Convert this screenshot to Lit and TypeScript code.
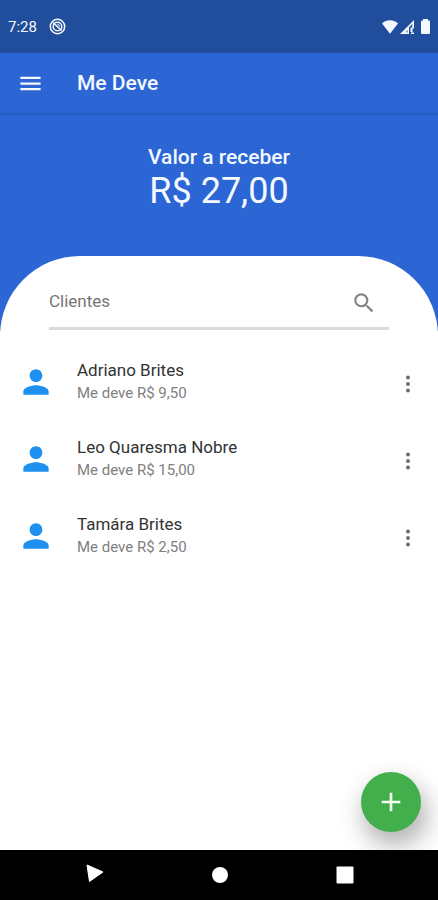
import { LitElement, html, css, svg } from "lit";
import { customElement, state } from "lit/decorators.js";

interface Client {
  name: string;
  debt: string;
}

const glyphs = {
  menu: svg`<path d="M3 18h18v-2H3v2zm0-5h18v-2H3v2zm0-7v2h18V6H3z"/>`,
  person: svg`<path d="M12 12c2.21 0 4-1.79 4-4s-1.79-4-4-4-4 1.79-4 4 1.79 4 4 4zm0 2c-2.67 0-8 1.34-8 4v2h16v-2c0-2.66-5.33-4-8-4z"/>`,
  search: svg`<path d="M15.5 14h-.79l-.28-.27A6.47 6.47 0 0 0 16 9.5 6.5 6.5 0 1 0 9.5 16c1.61 0 3.09-.59 4.23-1.57l.27.28v.79l5 4.99L20.49 19l-4.99-5zm-6 0C7.01 14 5 11.99 5 9.5S7.01 5 9.5 5 14 7.01 14 9.5 11.99 14 9.5 14z"/>`,
  more: svg`<circle cx="12" cy="6" r="1.8"/><circle cx="12" cy="12" r="1.8"/><circle cx="12" cy="18" r="1.8"/>`,
  add: svg`<path d="M19 13h-6v6h-2v-6H5v-2h6V5h2v6h6v2z"/>`,
};

@customElement("app-root")
export class AppRoot extends LitElement {
  @state() private clients: Client[] = [
    { name: "Adriano Brites", debt: "Me deve R$ 9,50" },
    { name: "Leo Quaresma Nobre", debt: "Me deve R$ 15,00" },
    { name: "Tamára Brites", debt: "Me deve R$ 2,50" },
  ];
  @state() private query = "";

  static styles = css`
    :host {
      display: flex;
      flex-direction: column;
      min-height: 100vh;
      background: #fff;
      color: #333;
      font-family: Roboto, "Liberation Sans", sans-serif;
    }
    * {
      box-sizing: border-box;
    }
    svg {
      display: block;
      fill: currentColor;
    }
    button {
      display: grid;
      place-items: center;
      padding: 0;
      border: 0;
      background: none;
      color: inherit;
      cursor: pointer;
    }
    h1,
    p,
    ul {
      margin: 0;
      padding: 0;
    }
    .status {
      display: flex;
      align-items: center;
      height: 53px;
      padding: 0 8px;
      background: #204e9c;
      color: #f4f8ff;
      font-size: 15px;
    }
    .alert {
      margin-left: 12px;
    }
    .signals {
      display: flex;
      align-items: center;
      gap: 2px;
      margin-left: auto;
    }
    .battery {
      margin-left: 5px;
    }
    .bar {
      display: flex;
      align-items: center;
      gap: 33px;
      height: 62px;
      padding: 0 17px;
      border-bottom: 2px solid #275cbc;
      background: #2b66d4;
      color: #f4f8ff;
    }
    h1 {
      font-size: 21px;
      font-weight: 500;
    }
    .total {
      height: 216px;
      padding-top: 30px;
      background: #2b66d4;
      color: #f4f8ff;
      text-align: center;
    }
    .caption {
      font-size: 21px;
      font-weight: 500;
      line-height: 24px;
    }
    .amount {
      font-size: 36px;
      line-height: 44px;
    }
    .sheet {
      position: relative;
      flex: 1;
      margin-top: -75px;
      padding-top: 30px;
      border-radius: 80px 80px 0 0;
      background: #fff;
    }
    .search {
      display: flex;
      height: 44px;
      margin: 0 49px;
      padding-right: 12px;
      border-bottom: 3px solid #dadada;
    }
    .search input {
      flex: 1;
      min-width: 0;
      height: 30px;
      padding: 0;
      border: 0;
      outline: 0;
      background: none;
      color: #333;
      font: 17px/28px Roboto, "Liberation Sans", sans-serif;
    }
    .search input::placeholder {
      color: #757575;
      opacity: 1;
    }
    .search button {
      height: 34px;
      color: #858585;
    }
    ul {
      padding-top: 13px;
      list-style: none;
    }
    li {
      display: flex;
      align-items: center;
      height: 77px;
      padding: 0 17px;
    }
    .person {
      width: 38px;
      margin-right: 22px;
      color: #1e90f0;
    }
    .who {
      flex: 1;
      padding-bottom: 2px;
    }
    .name {
      color: #333;
      font-size: 17px;
      line-height: 24px;
    }
    .debt {
      color: #808080;
      font-size: 15px;
      line-height: 22px;
    }
    .more {
      padding-top: 4px;
      color: #6c6c6c;
    }
    .add {
      position: absolute;
      right: 17px;
      bottom: 18px;
      width: 60px;
      height: 60px;
      border-radius: 50%;
      background: #42ae4c;
      color: #f4fff4;
      box-shadow: 4px 12px 24px 2px rgba(0, 0, 0, 0.3);
    }
    .nav {
      position: relative;
      display: flex;
      align-items: center;
      justify-content: space-between;
      height: 50px;
      padding: 0 82px;
      background: #000;
      color: #fff;
    }
  `;

  private icon(shape: unknown, size: number) {
    return html`<svg viewBox="0 0 24 24" width=${size} height=${size} aria-hidden="true">${shape}</svg>`;
  }

  private onInput(e: Event) {
    this.query = (e.target as HTMLInputElement).value;
  }

  render() {
    const q = this.query.toLowerCase();
    const shown = this.clients.filter((c) => c.name.toLowerCase().includes(q));
    return html`
      <div class="status">
        <span>7:28</span>
        <svg class="alert" width="17" height="17" viewBox="0 0 17 17" aria-hidden="true">
          <g fill="none" stroke="currentColor">
            <circle cx="8.5" cy="8.5" r="7.200" stroke-width="1.500" />
            <circle cx="8.5" cy="8.5" r="4.300" stroke-width="1.500" />
            <path d="M4 4.500L12.500 12.500" stroke-width="1.600" />
            <path d="M8.500 6.500A2 2 0 0 1 10.500 8.500" stroke-width="1" />
          </g>
        </svg>
        <div class="signals">
          <svg width="16" height="14" viewBox="0 0 16 14" aria-hidden="true">
            <path d="M0 3.600C4.500-.8 11.500-.8 16 3.600L8 13.800z" />
          </svg>
          <svg width="14" height="14" viewBox="0 0 14 14" aria-hidden="true">
            <path fill-rule="evenodd" d="M0 14L14 0V8.500H12.300V4L9 7.300V14zM10.500 7.500h2V12h-2zM11 12.500h3V14h-3zM6.500 10.500h1v2h-1z" />
          </svg>
          <svg class="battery" width="9" height="15" viewBox="0 0 9 15" aria-hidden="true">
            <path d="M2 0h5v1.500H8q1 0 1 1V14q0 1-1 1H1q-1 0-1-1V2.500q0-1 1-1h1z" />
          </svg>
        </div>
      </div>
      <header class="bar">
        <button aria-label="Menu">${this.icon(glyphs.menu, 27)}</button>
        <h1>Me Deve</h1>
      </header>
      <section class="total">
        <p class="caption">Valor a receber</p>
        <p class="amount">R$ 27,00</p>
      </section>
      <main class="sheet">
        <div class="search">
          <input type="text" aria-label="Clientes" placeholder="Clientes" .value=${this.query} @input=${this.onInput} />
          <button aria-label="Buscar">${this.icon(glyphs.search, 26)}</button>
        </div>
        <ul>
          ${shown.map(
            (c) => html`<li>
              <span class="person">${this.icon(glyphs.person, 38)}</span>
              <div class="who">
                <p class="name">${c.name}</p>
                <p class="debt">${c.debt}</p>
              </div>
              <button class="more" aria-label="Opções de ${c.name}">${this.icon(glyphs.more, 26)}</button>
            </li>`
          )}
        </ul>
        <button class="add" aria-label="Adicionar cliente">${this.icon(glyphs.add, 32)}</button>
      </main>
      <nav class="nav">
        <button aria-label="Voltar">
          <svg width="24" height="22" viewBox="0 0 24 22"><path d="M5 1L21 8 7.500 17.500z" stroke="#fff" stroke-width="1" stroke-linejoin="round" /></svg>
        </button>
        <button aria-label="Início">
          <svg width="22" height="22" viewBox="0 0 22 22"><circle cx="11" cy="11" r="8" /></svg>
        </button>
        <button aria-label="Recentes">
          <svg width="22" height="22" viewBox="0 0 22 22"><rect x="2.500" y="2.500" width="17" height="17" rx="1" /></svg>
        </button>
      </nav>
    `;
  }
}
